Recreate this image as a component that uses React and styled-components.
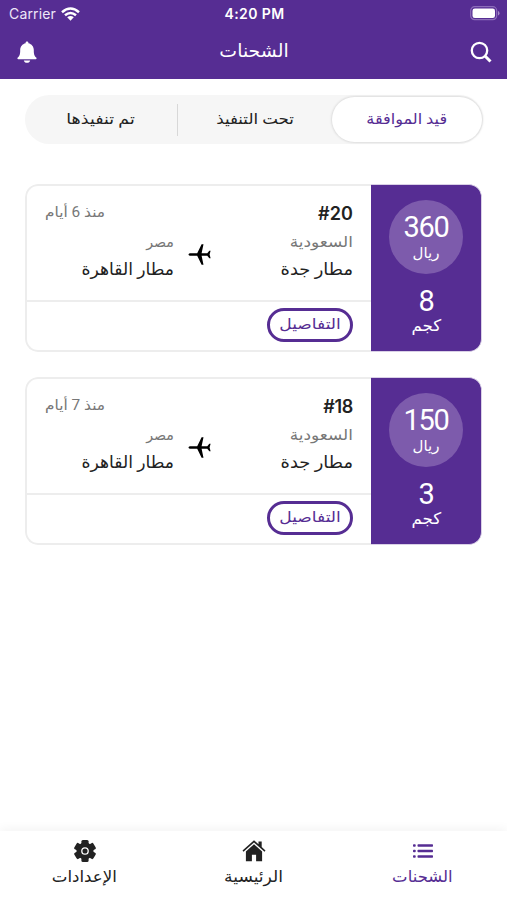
import React, { useState } from "react";
import styled, { createGlobalStyle } from "styled-components";

const PURPLE = "#562d93";

const GlobalStyle = createGlobalStyle`
  * {
    box-sizing: border-box;
  }
  body {
    margin: 0;
    background: #fff;
    color: #222;
    font-family: Inter, "DejaVu Sans", sans-serif;
  }
  button {
    border: 0;
    padding: 0;
    background: none;
    color: inherit;
    font: inherit;
  }
  svg {
    display: block;
  }
`;

const Page = styled.div`
  width: 507px;
  height: 900px;
  display: flex;
  flex-direction: column;
  direction: rtl;
  overflow: hidden;
`;

// arabic label, $stretch adjusts the width of the glyphs
const Label = styled.span`
  display: block;
  white-space: nowrap;
  font-family: Roboto, "DejaVu Sans", sans-serif;
  font-size: ${(p) => p.$size || 16}px;
  line-height: ${(p) => p.$line || 24}px;
  transform: scaleX(${(p) => p.$stretch || 1});
  transform-origin: ${(p) => p.$origin || "center"};
`;

// header
const Header = styled.header`
  height: 79px;
  background: ${PURPLE};
  color: #fff;
`;

const StatusBar = styled.div`
  direction: ltr;
  height: 27px;
  padding: 0 7px 0 9px;
  display: grid;
  grid-template-columns: 1fr auto 1fr;
  align-items: center;
  font-size: 14px;
`;

const Carrier = styled.div`
  display: flex;
  align-items: center;
  gap: 5px;
  color: #eee6f8;
  letter-spacing: 0.15px;
`;

const Time = styled.div`
  font-weight: 600;
  letter-spacing: 0.4px;
`;

const Battery = styled.div`
  justify-self: end;
`;

const TitleBar = styled.div`
  direction: ltr;
  height: 50px;
  padding: 0 15px 0 16px;
  display: grid;
  grid-template-columns: 22px 1fr 22px;
  align-items: center;
  justify-items: center;
`;

const Title = styled(Label)`
  margin-bottom: 3px;
`;

// tabs
const Tabs = styled.nav`
  height: 49px;
  margin: 16px 24px 0 25px;
  border-radius: 25px;
  background: #f6f6f6;
  display: grid;
  grid-template-columns: 151px 1fr 152px;
`;

const Tab = styled.button`
  display: flex;
  align-items: center;
  justify-content: center;
  padding-bottom: 2px;
  color: ${(p) => (p.$active ? PURPLE : "#222")};
  ${(p) =>
    p.$active &&
    `
    margin: 2px 1px 2px 0;
    border-radius: 25px;
    background: #fff;
    box-shadow: 0 0 2px 1px #dedede;
  `}
  ${(p) =>
    p.$divider &&
    `
    border-left: 1px solid #d8d8d8;
    height: 32px;
    align-self: center;
  `}
`;

// shipments
const List = styled.main`
  flex: 1;
  padding: 40px 25px 0;
  display: flex;
  flex-direction: column;
  gap: 25px;
`;

const Card = styled.article`
  height: 168px;
  display: flex;
  border-radius: 13px;
  overflow: hidden;
`;

const Price = styled.div`
  width: 111px;
  background: ${PURPLE};
  border: solid #d9d0e6;
  border-width: 1px 1px 1px 0;
  border-radius: 0 13px 13px 0;
  color: #fff;
  display: flex;
  flex-direction: column;
  align-items: center;
  padding-top: 15px;
`;

const Circle = styled.div`
  width: 74px;
  height: 74px;
  border-radius: 50%;
  background: #7d5bac;
  display: flex;
  flex-direction: column;
  align-items: center;
  padding-top: 12px;
`;

const Amount = styled.div`
  font-family: Roboto, sans-serif;
  font-size: 29px;
  line-height: 30px;
  letter-spacing: -1.3px;
  direction: ltr;
`;

const Weight = styled(Amount)`
  margin-top: 12px;
`;

const Details = styled.div`
  flex: 1;
  border: 2px solid #ededed;
  border-right: 0;
  border-radius: 13px 0 0 13px;
  display: flex;
  flex-direction: column;
`;

const Route = styled.div`
  height: 116px;
  padding: 14px 18px 0 18px;
  border-bottom: 2px solid #ededed;
`;

const Row = styled.div`
  display: flex;
  justify-content: space-between;
`;

const Number = styled.div`
  direction: ltr;
  font-size: 18px;
  line-height: 27px;
  font-weight: 600;
  letter-spacing: ${(p) => (p.$tight ? "-0.3px" : "0.1px")};
`;

const Stops = styled.div`
  display: grid;
  grid-template-columns: 140px 39px 1fr;
  margin-top: 2px;
`;

const Country = styled.div`
  color: #777;
`;

const Plane = styled.div`
  padding: 14px 2px 0 0;
`;

const Actions = styled.div`
  padding: 6px 18px 0;
`;

const DetailsButton = styled.button`
  width: 86px;
  height: 34px;
  border: 3px solid ${PURPLE};
  border-radius: 17px;
  color: ${PURPLE};
  display: flex;
  justify-content: center;
  align-items: center;
  padding-bottom: 2px;
`;

// bottom bar
const BottomNav = styled.nav`
  height: 69px;
  display: grid;
  grid-template-columns: repeat(3, 1fr);
  box-shadow: 0 -2px 10px rgba(0, 0, 0, 0.05);
`;

const NavItem = styled.button`
  display: flex;
  flex-direction: column;
  align-items: center;
  gap: 3px;
  padding-top: 9px;
  color: ${(p) => (p.$active ? PURPLE : "#222")};
`;

const WifiIcon = () => (
  <svg width="19" height="14" viewBox="0 0 19 14" fill="none" stroke="#fff" strokeWidth="2.5">
    <path d="M1 5.2Q9.500 -2.200 18 5.200M4 8.300Q9.500 3.600 15 8.300" />
    <path d="M6.200 10.300Q9.500 7.600 12.800 10.300L9.500 13.700Z" fill="#fff" stroke="none" />
  </svg>
);

const BatteryIcon = () => (
  <svg width="30" height="15" viewBox="0 0 30 15">
    <rect x="0.700" y="0.700" width="26" height="13" rx="4" fill="none" stroke="#8d6dba" strokeWidth="1.200" />
    <rect x="2.500" y="2.500" width="22.500" height="9.500" rx="2.300" fill="#fff" />
    <path d="M28 5v4.500q1.500-.6 1.500-2.250T28 5" fill="#a58bc8" />
  </svg>
);

const BellIcon = () => (
  <svg width="20" height="22" viewBox="0 0 20 22" fill="#fff">
    <path d="M10 0.500c-.9 0-1.400.6-1.400 1.400v.3C5.300 2.900 3.200 5.600 3.200 9c0 4.300-.5 6-2.400 7.600-.7.6-.5 1.700.5 1.700h17.400c1 0 1.200-1.100.5-1.700C17.300 15 16.800 13.300 16.800 9c0-3.400-2.100-6.100-5.400-6.800v-.3c0-.8-.5-1.400-1.400-1.400Z" />
    <path d="M6.800 19.400h6.400c-.4 1.600-1.500 2.300-3.200 2.300s-2.800-.7-3.200-2.300Z" />
  </svg>
);

const SearchIcon = () => (
  <svg width="22" height="22" viewBox="0 0 22 22" fill="none" stroke="#fff" strokeWidth="2.300">
    <circle cx="9.500" cy="9.500" r="7.700" />
    <path d="M15 15l5.500 5.500" strokeWidth="3" />
  </svg>
);

const PlaneIcon = () => (
  <svg width="23" height="23" viewBox="0 0 23 23" fill="#000">
    <path d="M0.500 11.500c0-.9 1.100-1.300 2.500-1.300h6.200L13.600 1.200h1.900L13.600 10.200h5.700l2-2.500h1.300l-1 3.800 1 3.800h-1.300l-2-2.500h-5.700l1.900 9h-1.900L9.200 12.800H3c-1.400 0-2.500-.4-2.500-1.300Z" />
  </svg>
);

const ListIcon = () => (
  <svg width="22" height="22" viewBox="0 0 22 22" fill="currentColor">
    {[4.300, 9.800, 15.300].map((y) => (
      <g key={y}>
        <rect x="1" y={y} width="2.700" height="2.400" rx="0.800" />
        <rect x="5.500" y={y} width="15.500" height="2.400" rx="0.700" />
      </g>
    ))}
  </svg>
);

const HomeIcon = () => (
  <svg width="24" height="22" viewBox="0 0 24 22" fill="currentColor">
    <path d="M12 4.300L3.900 11.600v9.700h6v-6.500h4.200v6.500h6v-9.700Z" />
    <path d="M12 0.200L0.500 10.500l1 1.200L12 2.400l10.500 9.300 1-1.200L19.700 7V1.500h-3.200v2.700Z" />
  </svg>
);

const GearIcon = () => (
  <svg width="22" height="22" viewBox="0 0 22 22" fill="none">
    <circle cx="11" cy="11" r="8.500" fill="currentColor" />
    {[0, 60, 120].map((deg) => (
      <rect key={deg} x="7.400" y="0" width="7.200" height="22" rx="1.500" fill="currentColor" transform={`rotate(${deg} 11 11)`} />
    ))}
    <circle cx="11" cy="11" r="3.200" stroke="#fff" strokeWidth="1.300" />
  </svg>
);

const tabs = [
  { id: "pending", label: "قيد الموافقة", stretch: 1.07 },
  { id: "progress", label: "تحت التنفيذ", stretch: 1.11, divider: true },
  { id: "done", label: "تم تنفيذها", stretch: 1.16 },
];

const shipments = [
  { id: 20, price: 360, weight: 8, date: "منذ 6 أيام" },
  { id: 18, price: 150, weight: 3, date: "منذ 7 أيام" },
];

function Shipment({ item }) {
  return (
    <Card>
      <Price>
        <Circle>
          <Amount>{item.price}</Amount>
          <Label $size={15} $line={22}>ريال</Label>
        </Circle>
        <Weight>{item.weight}</Weight>
        <Label $size={16} $line={20} $stretch={1.04}>كجم</Label>
      </Price>
      <Details>
        <Route>
          <Row>
            <Number $tight={item.id === 18}>#{item.id}</Number>
            <Country>
              <Label $size={14} $line={24} $stretch={1.1} $origin="left">{item.date}</Label>
            </Country>
          </Row>
          <Stops>
            <div>
              <Country>
                <Label $size={15} $line={26} $stretch={1.13} $origin="right">السعودية</Label>
              </Country>
              <Label $size={17} $line={28} $stretch={1.05} $origin="right">مطار جدة</Label>
            </div>
            <Plane>
              <PlaneIcon />
            </Plane>
            <div>
              <Country>
                <Label $size={15} $line={26} $stretch={0.95} $origin="right">مصر</Label>
              </Country>
              <Label $size={17} $line={28} $stretch={1.01} $origin="right">مطار القاهرة</Label>
            </div>
          </Stops>
        </Route>
        <Actions>
          <DetailsButton>
            <Label $size={15} $stretch={1.14}>التفاصيل</Label>
          </DetailsButton>
        </Actions>
      </Details>
    </Card>
  );
}

function App() {
  const [active, setActive] = useState("pending");

  return (
    <Page>
      <GlobalStyle />
      <Header>
        <StatusBar>
          <Carrier>
            Carrier <WifiIcon />
          </Carrier>
          <Time>4:20 PM</Time>
          <Battery>
            <BatteryIcon />
          </Battery>
        </StatusBar>
        <TitleBar>
          <BellIcon />
          <Title $size={18} $stretch={1.05}>الشحنات</Title>
          <SearchIcon />
        </TitleBar>
      </Header>
      <Tabs>
        {tabs.map((tab) => (
          <Tab
            key={tab.id}
            $active={active === tab.id}
            $divider={tab.divider}
            onClick={() => setActive(tab.id)}
          >
            <Label $size={15} $stretch={tab.stretch}>{tab.label}</Label>
          </Tab>
        ))}
      </Tabs>
      <List>
        {shipments.map((item) => (
          <Shipment key={item.id} item={item} />
        ))}
      </List>
      <BottomNav>
        <NavItem $active>
          <ListIcon />
          <Label $size={16} $stretch={1.03}>الشحنات</Label>
        </NavItem>
        <NavItem>
          <HomeIcon />
          <Label $size={16} $stretch={1.07}>الرئيسية</Label>
        </NavItem>
        <NavItem>
          <GearIcon />
          <Label $size={16} $stretch={1.04}>الإعدادات</Label>
        </NavItem>
      </BottomNav>
    </Page>
  );
}

export default App;
